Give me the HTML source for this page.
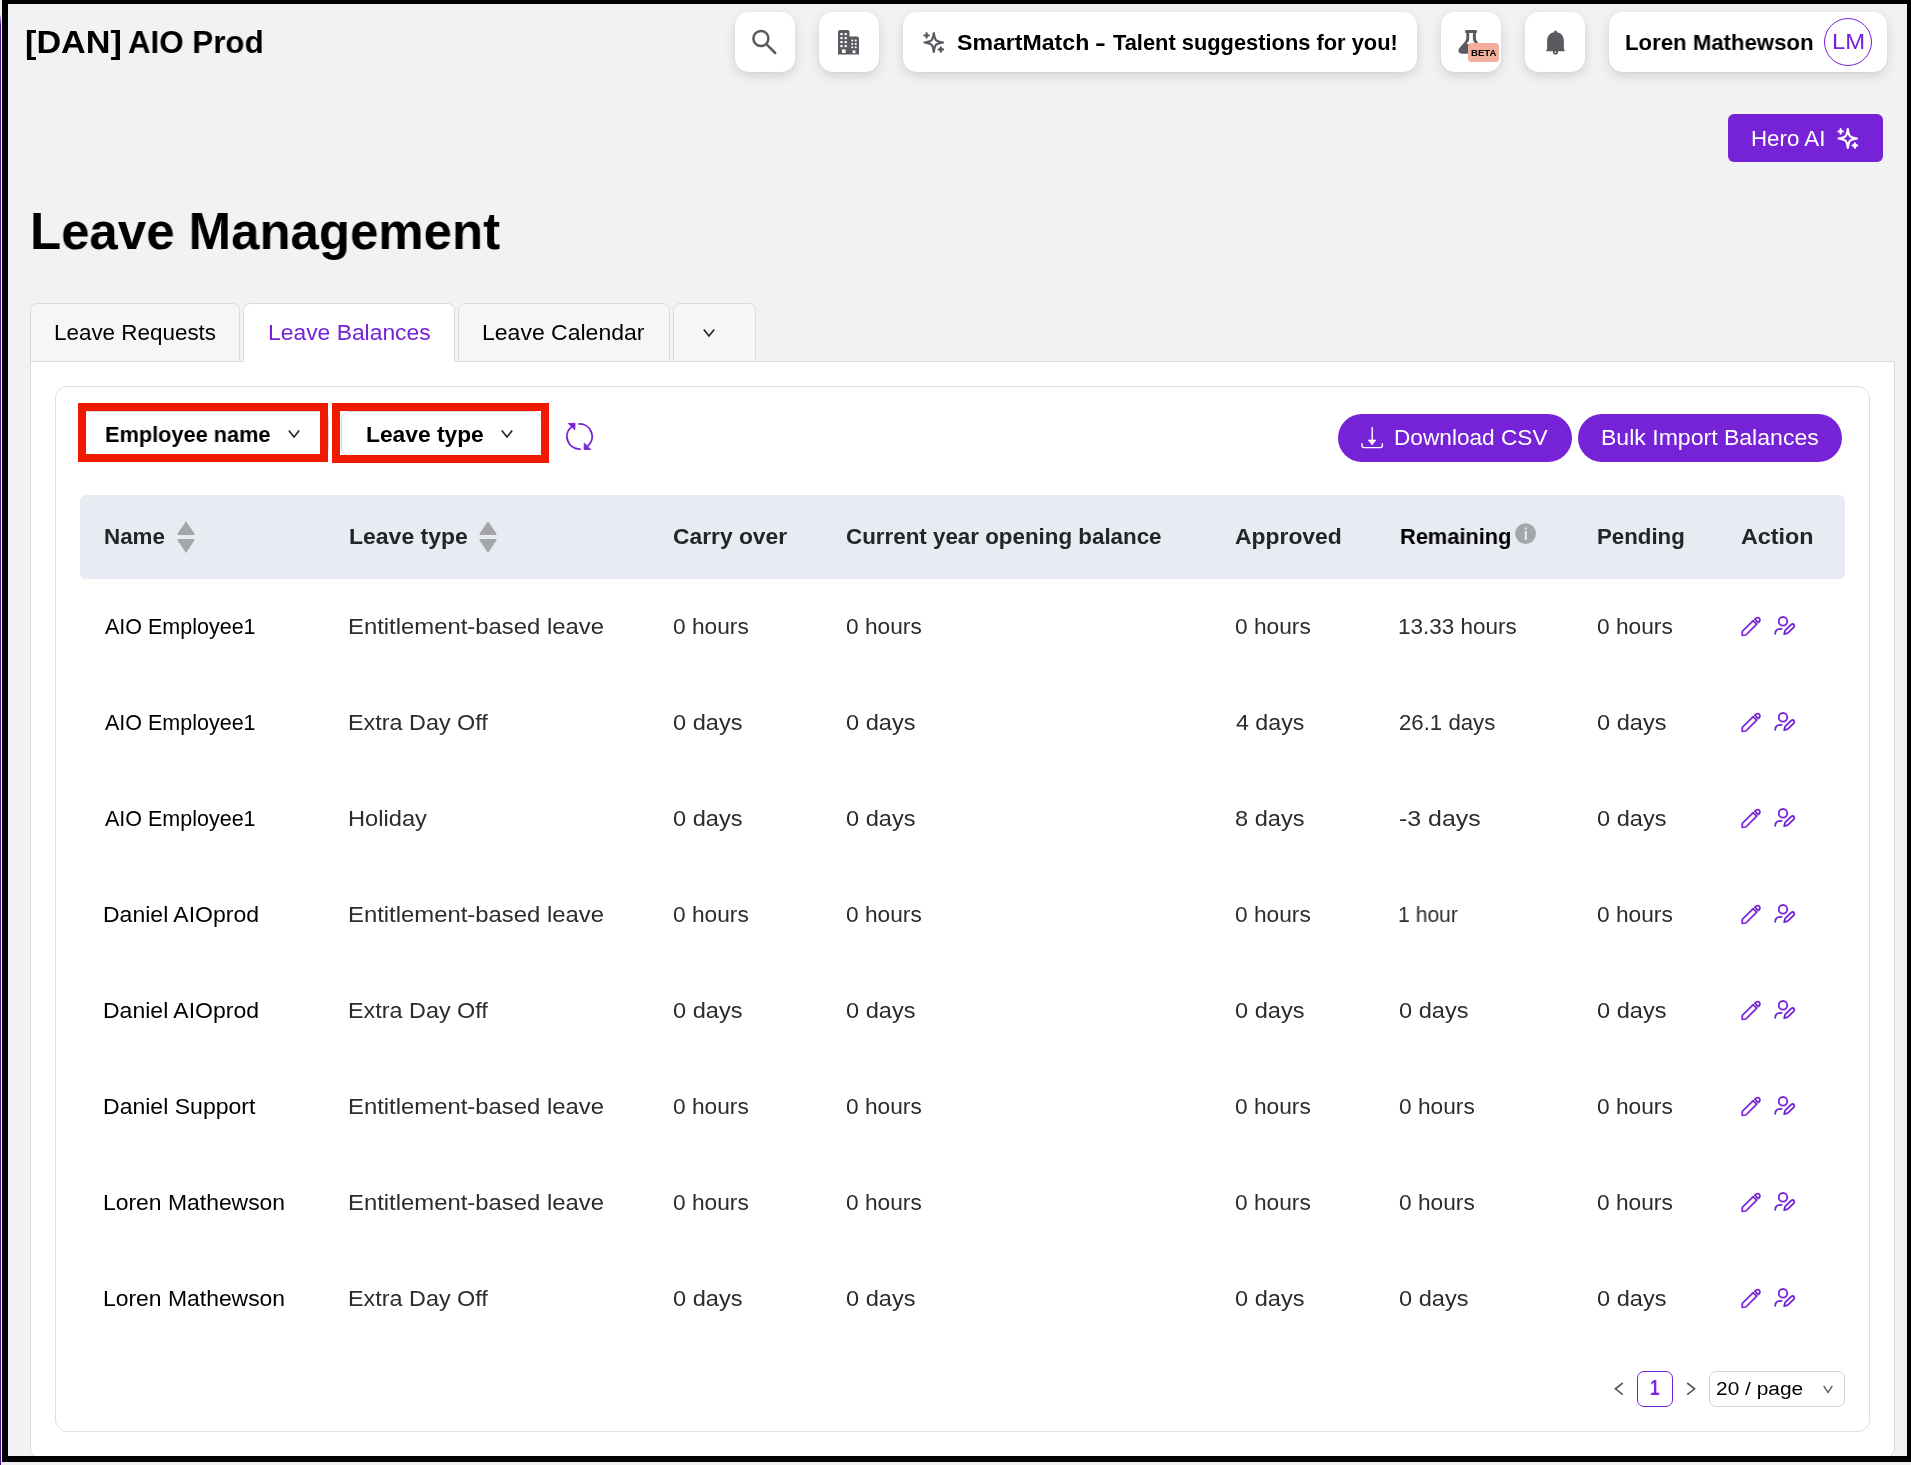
<!DOCTYPE html>
<html lang="en"><head><meta charset="utf-8"><title>Leave Management</title>
<style>
*{box-sizing:border-box}
html,body{margin:0;padding:0}
body{width:1911px;height:1465px;overflow:hidden;position:relative;background:#f1f2f4;
 font-family:"Liberation Sans",sans-serif;color:#000;-webkit-font-smoothing:antialiased}
.a,.t{position:absolute}
.t{white-space:nowrap;display:block;will-change:transform;transform-origin:0 0}
.hb{position:absolute;top:12px;height:60px;background:#fff;border-radius:14px;
 box-shadow:0 4px 12px rgba(0,0,0,.13),0 1px 3px rgba(0,0,0,.04)}
.tab{position:absolute;top:303px;height:59px;border:1px solid #d9dce1;border-radius:7px 7px 0 0;background:#f6f6f7}
.tab.on{background:#fff;border-bottom-color:#fff}
.panel{position:absolute;left:30px;top:361px;width:1865px;height:1097px;background:#fff;
 border:1px solid #d9dce1;border-radius:0 0 9px 9px}
.card{position:absolute;left:55px;top:386px;width:1815px;height:1046px;background:#fff;border:1px solid #dcdfe4;border-radius:12px}
.red{position:absolute;border:8px solid #f01a00}
.pill{position:absolute;top:414px;height:48px;border-radius:24px;background:#7622d7}
.thead{position:absolute;left:80px;top:495px;width:1765px;height:84px;background:#e8ebf2;border-radius:6px}
svg{position:absolute;overflow:visible}
</style></head>
<body>
<header>
<span class="t " style="left:25.00px;top:22.00px;line-height:40px;font-size:32px;font-weight:700;color:#000;transform:scaleX(1.0690);">[DAN] </span>
<span class="t " style="left:128.00px;top:22.00px;line-height:40px;font-size:32px;font-weight:700;color:#000;transform:scaleX(0.9779);">AIO Prod</span>
<div class="hb" style="left:735px;width:60px"></div>
<svg style="left:748px;top:26px" width="32" height="32" viewBox="0 0 32 32" fill="none" stroke="#595b60" stroke-width="2.5" stroke-linecap="round"><circle cx="12.9" cy="12.5" r="7.5"/><path d="M18.6 18.4 L27.2 27"/></svg>
<div class="hb" style="left:819px;width:60px"></div>
<svg style="left:838px;top:29.5px" width="22" height="25" viewBox="0 0 22 25"><path d="M0 2 Q0 0 2 0 L9.5 0 Q11.5 0 11.5 2 L11.5 6.6 L19 6.6 Q21 6.6 21 8.6 L21 24.6 L0 24.6 Z" fill="#595b60"/><g fill="#fff"><rect x="2.4" y="3" width="2.2" height="2.2"/><rect x="6.6" y="3" width="2.2" height="2.2"/><rect x="2.4" y="7" width="2.2" height="2.2"/><rect x="6.6" y="7" width="2.2" height="2.2"/><rect x="2.4" y="11" width="2.2" height="2.2"/><rect x="6.6" y="11" width="2.2" height="2.2"/><rect x="2.4" y="15" width="2.2" height="2.2"/><rect x="6.6" y="15" width="2.2" height="2.2"/><rect x="4" y="19.4" width="3.6" height="3.6"/><rect x="13.4" y="9.6" width="1.8" height="1.8"/><rect x="16.8" y="9.6" width="1.8" height="1.8"/><rect x="13.4" y="13" width="1.8" height="1.8"/><rect x="16.8" y="13" width="1.8" height="1.8"/><rect x="13.4" y="16.4" width="1.8" height="1.8"/><rect x="16.8" y="16.4" width="1.8" height="1.8"/><rect x="14.6" y="20.4" width="2.8" height="2.8"/></g></svg>
<div class="hb" style="left:903px;width:514px"></div>
<svg style="left:923.1px;top:32px" width="22" height="21" viewBox="0 0 22 21" fill="none" stroke="#595b60" stroke-width="2.2" stroke-linejoin="round"><path d="M10.8 1.2 C11.9 8.6 12.7 9.4 20 10.5 C12.7 11.6 11.9 12.4 10.8 19.8 C9.7 12.4 8.9 11.6 1.5 10.5 C8.9 9.4 9.7 8.6 10.8 1.2 Z"/><path d="M3.6 1.0 Q3.6 3.4 6.0 3.4 Q3.6 3.4 3.6 5.8 Q3.6 3.4 1.2 3.4 Q3.6 3.4 3.6 1.0 Z" fill="#595b60" stroke-width="1.9"/><path d="M17.9 15.1 Q17.9 17.5 20.3 17.5 Q17.9 17.5 17.9 19.9 Q17.9 17.5 15.5 17.5 Q17.9 17.5 17.9 15.1 Z" fill="#595b60" stroke-width="1.9"/></svg>
<span class="t " style="left:957.00px;top:28.00px;line-height:30px;font-size:21.7px;font-weight:700;color:#000;transform:scaleX(1.0656);">SmartMatch </span>
<span class="t " style="left:1095.00px;top:28.00px;line-height:30px;font-size:21.7px;font-weight:700;color:#000;transform:scaleX(1.4911);">- </span>
<span class="t " style="left:1113.00px;top:28.00px;line-height:30px;font-size:21.7px;font-weight:700;color:#000;transform:scaleX(1.0071);">Talent suggestions for you!</span>
<div class="hb" style="left:1441px;width:60px"></div>
<svg style="left:1458px;top:30px" width="27" height="24" viewBox="0 0 27 24"><path d="M8.4 0 L17.6 0 Q19.1 0 19.1 1.5 Q19.1 3 17.9 3 L17.9 8 Q17.9 10.5 19.5 12 L24 17 Q26.5 20 25.5 22 Q24.8 23.7 22 23.7 L4.2 23.7 Q1.4 23.7 0.7 22 Q-0.3 20 2.2 17 L6.7 12 Q8.3 10.5 8.3 8 L8.3 3 Q6.9 3 6.9 1.5 Q6.9 0 8.4 0 Z" fill="#595b60"/><path d="M11.2 3 L14.9 3 L14.9 8.5 Q14.9 11 16.5 12.6 L17.8 14 L8.4 14 L9.7 12.6 Q11.2 11 11.2 8.5 Z" fill="#fff"/></svg>
<div class="a" style="left:1468.2px;top:43.2px;width:30.6px;height:19.1px;border-radius:3.5px;background:#f3ae9d"></div>
<span class="t " style="left:1471.00px;top:46.00px;line-height:14px;font-size:9.6px;font-weight:700;color:#000;transform:scaleX(1.0000);">BETA</span>
<div class="hb" style="left:1525px;width:60px"></div>
<svg style="left:1546px;top:29.5px" width="19" height="25" viewBox="0 0 19 25"><path d="M9.5 0.5 Q10.9 0.5 11.2 2.2 C15.6 2.9 17.9 6.6 17.9 11.2 L17.9 19.2 L18.9 20.6 L18.9 21.3 L0.1 21.3 L0.1 20.6 L1.1 19.2 L1.1 11.2 C1.1 6.6 3.4 2.9 7.8 2.2 Q8.1 0.5 9.5 0.5 Z" fill="#595b60"/><circle cx="9.5" cy="22" r="2.6" fill="#595b60"/><circle cx="9.5" cy="22.3" r="0.8" fill="#fff"/></svg>
<div class="hb" style="left:1609px;width:278px"></div>
<span class="t " style="left:1625.00px;top:27.00px;line-height:31px;font-size:22.3px;font-weight:700;color:#000;transform:scaleX(0.9947);">Loren Mathewson</span>
<div class="a" style="left:1824px;top:18px;width:48px;height:48px;border-radius:50%;border:1.5px solid #7622d7"></div>
<span class="t " style="left:1832.00px;top:27.00px;line-height:30px;font-size:21.4px;font-weight:400;color:#7622d7;transform:scaleX(1.1154);">LM</span>
</header>
<div class="a" style="left:1728px;top:114px;width:155px;height:48px;border-radius:6px;background:#7622d7"></div>
<span class="t " style="left:1751.00px;top:123.00px;line-height:31px;font-size:22.3px;font-weight:400;color:#fff;transform:scaleX(1.0000);">Hero AI</span>
<svg style="left:1837px;top:128.1px" width="22" height="21" viewBox="0 0 22 21" fill="none" stroke="#fff" stroke-width="2.2" stroke-linejoin="round"><path d="M10.8 1.2 C11.9 8.6 12.7 9.4 20 10.5 C12.7 11.6 11.9 12.4 10.8 19.8 C9.7 12.4 8.9 11.6 1.5 10.5 C8.9 9.4 9.7 8.6 10.8 1.2 Z"/><path d="M3.6 1.0 Q3.6 3.4 6.0 3.4 Q3.6 3.4 3.6 5.8 Q3.6 3.4 1.2 3.4 Q3.6 3.4 3.6 1.0 Z" fill="#fff" stroke-width="1.9"/><path d="M17.9 15.1 Q17.9 17.5 20.3 17.5 Q17.9 17.5 17.9 19.9 Q17.9 17.5 15.5 17.5 Q17.9 17.5 17.9 15.1 Z" fill="#fff" stroke-width="1.9"/></svg>
<h1 style="margin:0"><span class="t " style="left:30.00px;top:201.00px;line-height:60px;font-size:51.5px;font-weight:700;color:#000;transform:scaleX(0.9894);">Leave Management</span></h1>
<nav>
<div class="panel"></div>
<div class="tab" style="left:30px;width:210px"></div>
<div class="tab on" style="left:243px;width:212px"></div>
<div class="tab" style="left:458px;width:212px"></div>
<div class="tab" style="left:673px;width:83px"></div>
<span class="t " style="left:54.00px;top:317.00px;line-height:31px;font-size:22px;font-weight:400;color:#000;transform:scaleX(1.0192);">Leave Requests</span>
<span class="t " style="left:268.00px;top:317.00px;line-height:31px;font-size:22px;font-weight:400;color:#7622d7;transform:scaleX(1.0390);">Leave Balances</span>
<span class="t " style="left:482.00px;top:317.00px;line-height:31px;font-size:22px;font-weight:400;color:#000;transform:scaleX(1.0458);">Leave Calendar</span>
<svg style="left:703px;top:327.5px" width="12" height="10" viewBox="0 0 12 10" fill="none" stroke="#222" stroke-width="1.6"><path d="M0.8 1.6 L6 8 L11.2 1.6"/></svg>
</nav>
<main>
<div class="card"></div>
<div class="a" style="left:80px;top:411px;width:249px;height:46px;border:1px solid #d5d8dd;border-radius:9px"></div>
<div class="a" style="left:341px;top:411px;width:200.5px;height:46px;border:1px solid #d5d8dd;border-radius:9px"></div>
<div class="red" style="left:78px;top:403px;width:250px;height:59px"></div>
<div class="red" style="left:332px;top:403px;width:217px;height:60px"></div>
<span class="t " style="left:105.00px;top:419.00px;line-height:31px;font-size:22px;font-weight:700;color:#000;transform:scaleX(0.9880);">Employee name</span>
<svg style="left:288px;top:429px" width="12" height="10" viewBox="0 0 12 10" fill="none" stroke="#222" stroke-width="1.6"><path d="M0.8 1.4 L6 8 L11.2 1.4"/></svg>
<span class="t " style="left:366.00px;top:419.00px;line-height:31px;font-size:22px;font-weight:700;color:#000;transform:scaleX(1.0357);">Leave type</span>
<svg style="left:500.5px;top:429px" width="12" height="10" viewBox="0 0 12 10" fill="none" stroke="#222" stroke-width="1.6"><path d="M0.8 1.4 L6 8 L11.2 1.4"/></svg>
<svg style="left:555px;top:415px" width="50" height="45" viewBox="0 0 50 45" fill="none" stroke="#7622d7" stroke-width="1.9" stroke-linecap="round"><path d="M24.13 8.91 A12.6 12.6 0 0 1 33 30.86"/><path d="M25 34.09 A12.6 12.6 0 0 1 16.14 12.14"/><path d="M29.3 28.3 L29.1 34.5 L35.3 34.4 Z" fill="#7622d7" stroke-width="0.9" stroke-linejoin="round"/><path d="M13.6 8.5 L20.05 8.35 L19.8 14.5 Z" fill="#7622d7" stroke-width="0.9" stroke-linejoin="round"/></svg>
<div class="pill" style="left:1338px;width:234px"></div>
<svg style="left:1361px;top:427px" width="23" height="22" viewBox="0 0 23 22" fill="none" stroke="#fff" stroke-width="1.4" stroke-linecap="round" stroke-linejoin="round"><path d="M11.2 0.5 L11.2 16"/><path d="M7.6 13.1 L14.8 13.1 L11.2 17.6 Z" fill="#fff" stroke-width="0.8"/><path d="M1 16.8 L1 18.6 Q1 20.6 3 20.6 L19.4 20.6 Q21.4 20.6 21.4 18.6 L21.4 16.8"/></svg>
<span class="t " style="left:1394.00px;top:422.00px;line-height:31px;font-size:22.2px;font-weight:400;color:#fff;transform:scaleX(1.0203);">Download CSV</span>
<div class="pill" style="left:1578px;width:264px"></div>
<span class="t " style="left:1601.00px;top:422.00px;line-height:31px;font-size:22.2px;font-weight:400;color:#fff;transform:scaleX(1.0386);">Bulk Import Balances</span>
<div class="thead"></div>
<span class="t " style="left:104.00px;top:521.00px;line-height:31px;font-size:22px;font-weight:700;color:#22252a;transform:scaleX(1.0172);">Name</span>
<svg style="left:176px;top:520px" width="20" height="34" viewBox="0 0 20 34"><path d="M10 1.2 L18.4 13.6 Q19 15.1 17.4 15.1 L2.6 15.1 Q1 15.1 1.6 13.6 Z" fill="#a4a6aa"/><path d="M10 32.9 L18.4 20.6 Q19 19.1 17.4 19.1 L2.6 19.1 Q1 19.1 1.6 20.6 Z" fill="#a4a6aa"/></svg>
<span class="t " style="left:349.00px;top:521.00px;line-height:31px;font-size:22px;font-weight:700;color:#22252a;transform:scaleX(1.0446);">Leave type</span>
<svg style="left:478.2px;top:520px" width="20" height="34" viewBox="0 0 20 34"><path d="M10 1.2 L18.4 13.6 Q19 15.1 17.4 15.1 L2.6 15.1 Q1 15.1 1.6 13.6 Z" fill="#a4a6aa"/><path d="M10 32.9 L18.4 20.6 Q19 19.1 17.4 19.1 L2.6 19.1 Q1 19.1 1.6 20.6 Z" fill="#a4a6aa"/></svg>
<span class="t " style="left:673.00px;top:521.00px;line-height:31px;font-size:22px;font-weight:700;color:#22252a;transform:scaleX(1.0367);">Carry over</span>
<span class="t " style="left:846.00px;top:521.00px;line-height:31px;font-size:22px;font-weight:700;color:#22252a;transform:scaleX(1.0162);">Current year opening balance</span>
<span class="t " style="left:1235.00px;top:521.00px;line-height:31px;font-size:22px;font-weight:700;color:#22252a;transform:scaleX(1.0400);">Approved</span>
<span class="t " style="left:1400.00px;top:521.00px;line-height:31px;font-size:22px;font-weight:700;color:#000;transform:scaleX(0.9909);">Remaining</span>
<svg style="left:1515px;top:522.7px" width="21.2" height="21.2" viewBox="0 0 21.2 21.2"><circle cx="10.6" cy="10.6" r="10.4" fill="#a3a6ab"/><rect x="9.85" y="7.9" width="1.9" height="9" rx=".5" fill="#eceef3"/><rect x="9.75" y="4.5" width="2.1" height="1.9" rx=".6" fill="#eceef3"/></svg>
<span class="t " style="left:1597.00px;top:521.00px;line-height:31px;font-size:22px;font-weight:700;color:#22252a;transform:scaleX(1.0119);">Pending</span>
<span class="t " style="left:1741.00px;top:521.00px;line-height:31px;font-size:22px;font-weight:700;color:#22252a;transform:scaleX(1.0606);">Action</span>
<div>
<span class="t " style="left:105.00px;top:612.00px;line-height:30px;font-size:21.5px;font-weight:400;color:#000;transform:scaleX(1.0000);">AIO Employee1</span>
<span class="t " style="left:348.00px;top:612.00px;line-height:30px;font-size:21.5px;font-weight:400;color:#2a2c30;transform:scaleX(1.1096);">Entitlement-based leave</span>
<span class="t " style="left:673.00px;top:612.00px;line-height:30px;font-size:21.5px;font-weight:400;color:#2a2c30;transform:scaleX(1.0571);">0 hours</span>
<span class="t " style="left:846.00px;top:612.00px;line-height:30px;font-size:21.5px;font-weight:400;color:#2a2c30;transform:scaleX(1.0571);">0 hours</span>
<span class="t " style="left:1235.00px;top:612.00px;line-height:30px;font-size:21.5px;font-weight:400;color:#2a2c30;transform:scaleX(1.0571);">0 hours</span>
<span class="t " style="left:1398.00px;top:612.00px;line-height:30px;font-size:21.5px;font-weight:400;color:#2a2c30;transform:scaleX(1.0450);">13.33 hours</span>
<span class="t " style="left:1597.00px;top:612.00px;line-height:30px;font-size:21.5px;font-weight:400;color:#2a2c30;transform:scaleX(1.0571);">0 hours</span>
<svg style="left:1740.6px;top:616.0px" width="21" height="21" viewBox="0 0 21 21" fill="none" stroke="#7622d7" stroke-width="1.7" stroke-linejoin="round" stroke-linecap="round"><path d="M1.2 19.5 L1.3 15.4 L12.2 4.6 L15.7 8.1 L4.9 19.0 Z"/><path d="M13.9 3.1 Q16.4 .5 18.5 2.4 Q19.8 4.5 17.3 6.7 Z"/></svg>
<svg style="left:1773.6px;top:616.0px" width="22" height="20" viewBox="0 0 22 20" fill="none" stroke="#7622d7" stroke-width="1.8" stroke-linejoin="round" stroke-linecap="round"><circle cx="9" cy="5.3" r="4.3"/><path d="M1.2 17.8 Q1 12.6 7.6 12.8"/><path d="M10.2 18.2 L11 14.6 L17.2 8.6 Q18.8 7.4 20 8.7 Q20.9 10 19.6 11.4 L13.6 17.2 Z"/></svg>
</div>
<div>
<span class="t " style="left:105.00px;top:708.00px;line-height:30px;font-size:21.5px;font-weight:400;color:#000;transform:scaleX(1.0000);">AIO Employee1</span>
<span class="t " style="left:348.00px;top:708.00px;line-height:30px;font-size:21.5px;font-weight:400;color:#2a2c30;transform:scaleX(1.0866);">Extra Day Off</span>
<span class="t " style="left:673.00px;top:708.00px;line-height:30px;font-size:21.5px;font-weight:400;color:#2a2c30;transform:scaleX(1.0968);">0 days</span>
<span class="t " style="left:846.00px;top:708.00px;line-height:30px;font-size:21.5px;font-weight:400;color:#2a2c30;transform:scaleX(1.0968);">0 days</span>
<span class="t " style="left:1236.00px;top:708.00px;line-height:30px;font-size:21.5px;font-weight:400;color:#2a2c30;transform:scaleX(1.0794);">4 days</span>
<span class="t " style="left:1399.00px;top:708.00px;line-height:30px;font-size:21.5px;font-weight:400;color:#2a2c30;transform:scaleX(1.0326);">26.1 days</span>
<span class="t " style="left:1597.00px;top:708.00px;line-height:30px;font-size:21.5px;font-weight:400;color:#2a2c30;transform:scaleX(1.0968);">0 days</span>
<svg style="left:1740.6px;top:712.0px" width="21" height="21" viewBox="0 0 21 21" fill="none" stroke="#7622d7" stroke-width="1.7" stroke-linejoin="round" stroke-linecap="round"><path d="M1.2 19.5 L1.3 15.4 L12.2 4.6 L15.7 8.1 L4.9 19.0 Z"/><path d="M13.9 3.1 Q16.4 .5 18.5 2.4 Q19.8 4.5 17.3 6.7 Z"/></svg>
<svg style="left:1773.6px;top:712.0px" width="22" height="20" viewBox="0 0 22 20" fill="none" stroke="#7622d7" stroke-width="1.8" stroke-linejoin="round" stroke-linecap="round"><circle cx="9" cy="5.3" r="4.3"/><path d="M1.2 17.8 Q1 12.6 7.6 12.8"/><path d="M10.2 18.2 L11 14.6 L17.2 8.6 Q18.8 7.4 20 8.7 Q20.9 10 19.6 11.4 L13.6 17.2 Z"/></svg>
</div>
<div>
<span class="t " style="left:105.00px;top:804.00px;line-height:30px;font-size:21.5px;font-weight:400;color:#000;transform:scaleX(1.0000);">AIO Employee1</span>
<span class="t " style="left:348.00px;top:804.00px;line-height:30px;font-size:21.5px;font-weight:400;color:#2a2c30;transform:scaleX(1.1000);">Holiday</span>
<span class="t " style="left:673.00px;top:804.00px;line-height:30px;font-size:21.5px;font-weight:400;color:#2a2c30;transform:scaleX(1.0968);">0 days</span>
<span class="t " style="left:846.00px;top:804.00px;line-height:30px;font-size:21.5px;font-weight:400;color:#2a2c30;transform:scaleX(1.0968);">0 days</span>
<span class="t " style="left:1235.00px;top:804.00px;line-height:30px;font-size:21.5px;font-weight:400;color:#2a2c30;transform:scaleX(1.0968);">8 days</span>
<span class="t " style="left:1399.00px;top:804.00px;line-height:30px;font-size:21.5px;font-weight:400;color:#2a2c30;transform:scaleX(1.1594);">-3 days</span>
<span class="t " style="left:1597.00px;top:804.00px;line-height:30px;font-size:21.5px;font-weight:400;color:#2a2c30;transform:scaleX(1.0968);">0 days</span>
<svg style="left:1740.6px;top:808.0px" width="21" height="21" viewBox="0 0 21 21" fill="none" stroke="#7622d7" stroke-width="1.7" stroke-linejoin="round" stroke-linecap="round"><path d="M1.2 19.5 L1.3 15.4 L12.2 4.6 L15.7 8.1 L4.9 19.0 Z"/><path d="M13.9 3.1 Q16.4 .5 18.5 2.4 Q19.8 4.5 17.3 6.7 Z"/></svg>
<svg style="left:1773.6px;top:808.0px" width="22" height="20" viewBox="0 0 22 20" fill="none" stroke="#7622d7" stroke-width="1.8" stroke-linejoin="round" stroke-linecap="round"><circle cx="9" cy="5.3" r="4.3"/><path d="M1.2 17.8 Q1 12.6 7.6 12.8"/><path d="M10.2 18.2 L11 14.6 L17.2 8.6 Q18.8 7.4 20 8.7 Q20.9 10 19.6 11.4 L13.6 17.2 Z"/></svg>
</div>
<div>
<span class="t " style="left:103.00px;top:900.00px;line-height:30px;font-size:21.5px;font-weight:400;color:#000;transform:scaleX(1.0705);">Daniel AIOprod</span>
<span class="t " style="left:348.00px;top:900.00px;line-height:30px;font-size:21.5px;font-weight:400;color:#2a2c30;transform:scaleX(1.1096);">Entitlement-based leave</span>
<span class="t " style="left:673.00px;top:900.00px;line-height:30px;font-size:21.5px;font-weight:400;color:#2a2c30;transform:scaleX(1.0571);">0 hours</span>
<span class="t " style="left:846.00px;top:900.00px;line-height:30px;font-size:21.5px;font-weight:400;color:#2a2c30;transform:scaleX(1.0571);">0 hours</span>
<span class="t " style="left:1235.00px;top:900.00px;line-height:30px;font-size:21.5px;font-weight:400;color:#2a2c30;transform:scaleX(1.0571);">0 hours</span>
<span class="t " style="left:1398.00px;top:900.00px;line-height:30px;font-size:21.5px;font-weight:400;color:#2a2c30;transform:scaleX(0.9831);">1 hour</span>
<span class="t " style="left:1597.00px;top:900.00px;line-height:30px;font-size:21.5px;font-weight:400;color:#2a2c30;transform:scaleX(1.0571);">0 hours</span>
<svg style="left:1740.6px;top:904.0px" width="21" height="21" viewBox="0 0 21 21" fill="none" stroke="#7622d7" stroke-width="1.7" stroke-linejoin="round" stroke-linecap="round"><path d="M1.2 19.5 L1.3 15.4 L12.2 4.6 L15.7 8.1 L4.9 19.0 Z"/><path d="M13.9 3.1 Q16.4 .5 18.5 2.4 Q19.8 4.5 17.3 6.7 Z"/></svg>
<svg style="left:1773.6px;top:904.0px" width="22" height="20" viewBox="0 0 22 20" fill="none" stroke="#7622d7" stroke-width="1.8" stroke-linejoin="round" stroke-linecap="round"><circle cx="9" cy="5.3" r="4.3"/><path d="M1.2 17.8 Q1 12.6 7.6 12.8"/><path d="M10.2 18.2 L11 14.6 L17.2 8.6 Q18.8 7.4 20 8.7 Q20.9 10 19.6 11.4 L13.6 17.2 Z"/></svg>
</div>
<div>
<span class="t " style="left:103.00px;top:996.00px;line-height:30px;font-size:21.5px;font-weight:400;color:#000;transform:scaleX(1.0705);">Daniel AIOprod</span>
<span class="t " style="left:348.00px;top:996.00px;line-height:30px;font-size:21.5px;font-weight:400;color:#2a2c30;transform:scaleX(1.0866);">Extra Day Off</span>
<span class="t " style="left:673.00px;top:996.00px;line-height:30px;font-size:21.5px;font-weight:400;color:#2a2c30;transform:scaleX(1.0968);">0 days</span>
<span class="t " style="left:846.00px;top:996.00px;line-height:30px;font-size:21.5px;font-weight:400;color:#2a2c30;transform:scaleX(1.0968);">0 days</span>
<span class="t " style="left:1235.00px;top:996.00px;line-height:30px;font-size:21.5px;font-weight:400;color:#2a2c30;transform:scaleX(1.0968);">0 days</span>
<span class="t " style="left:1399.00px;top:996.00px;line-height:30px;font-size:21.5px;font-weight:400;color:#2a2c30;transform:scaleX(1.0968);">0 days</span>
<span class="t " style="left:1597.00px;top:996.00px;line-height:30px;font-size:21.5px;font-weight:400;color:#2a2c30;transform:scaleX(1.0968);">0 days</span>
<svg style="left:1740.6px;top:1000.0px" width="21" height="21" viewBox="0 0 21 21" fill="none" stroke="#7622d7" stroke-width="1.7" stroke-linejoin="round" stroke-linecap="round"><path d="M1.2 19.5 L1.3 15.4 L12.2 4.6 L15.7 8.1 L4.9 19.0 Z"/><path d="M13.9 3.1 Q16.4 .5 18.5 2.4 Q19.8 4.5 17.3 6.7 Z"/></svg>
<svg style="left:1773.6px;top:1000.0px" width="22" height="20" viewBox="0 0 22 20" fill="none" stroke="#7622d7" stroke-width="1.8" stroke-linejoin="round" stroke-linecap="round"><circle cx="9" cy="5.3" r="4.3"/><path d="M1.2 17.8 Q1 12.6 7.6 12.8"/><path d="M10.2 18.2 L11 14.6 L17.2 8.6 Q18.8 7.4 20 8.7 Q20.9 10 19.6 11.4 L13.6 17.2 Z"/></svg>
</div>
<div>
<span class="t " style="left:103.00px;top:1092.00px;line-height:30px;font-size:21.5px;font-weight:400;color:#000;transform:scaleX(1.0714);">Daniel Support</span>
<span class="t " style="left:348.00px;top:1092.00px;line-height:30px;font-size:21.5px;font-weight:400;color:#2a2c30;transform:scaleX(1.1096);">Entitlement-based leave</span>
<span class="t " style="left:673.00px;top:1092.00px;line-height:30px;font-size:21.5px;font-weight:400;color:#2a2c30;transform:scaleX(1.0571);">0 hours</span>
<span class="t " style="left:846.00px;top:1092.00px;line-height:30px;font-size:21.5px;font-weight:400;color:#2a2c30;transform:scaleX(1.0571);">0 hours</span>
<span class="t " style="left:1235.00px;top:1092.00px;line-height:30px;font-size:21.5px;font-weight:400;color:#2a2c30;transform:scaleX(1.0571);">0 hours</span>
<span class="t " style="left:1399.00px;top:1092.00px;line-height:30px;font-size:21.5px;font-weight:400;color:#2a2c30;transform:scaleX(1.0571);">0 hours</span>
<span class="t " style="left:1597.00px;top:1092.00px;line-height:30px;font-size:21.5px;font-weight:400;color:#2a2c30;transform:scaleX(1.0571);">0 hours</span>
<svg style="left:1740.6px;top:1096.0px" width="21" height="21" viewBox="0 0 21 21" fill="none" stroke="#7622d7" stroke-width="1.7" stroke-linejoin="round" stroke-linecap="round"><path d="M1.2 19.5 L1.3 15.4 L12.2 4.6 L15.7 8.1 L4.9 19.0 Z"/><path d="M13.9 3.1 Q16.4 .5 18.5 2.4 Q19.8 4.5 17.3 6.7 Z"/></svg>
<svg style="left:1773.6px;top:1096.0px" width="22" height="20" viewBox="0 0 22 20" fill="none" stroke="#7622d7" stroke-width="1.8" stroke-linejoin="round" stroke-linecap="round"><circle cx="9" cy="5.3" r="4.3"/><path d="M1.2 17.8 Q1 12.6 7.6 12.8"/><path d="M10.2 18.2 L11 14.6 L17.2 8.6 Q18.8 7.4 20 8.7 Q20.9 10 19.6 11.4 L13.6 17.2 Z"/></svg>
</div>
<div>
<span class="t " style="left:103.00px;top:1188.00px;line-height:30px;font-size:21.5px;font-weight:400;color:#000;transform:scaleX(1.0655);">Loren Mathewson</span>
<span class="t " style="left:348.00px;top:1188.00px;line-height:30px;font-size:21.5px;font-weight:400;color:#2a2c30;transform:scaleX(1.1096);">Entitlement-based leave</span>
<span class="t " style="left:673.00px;top:1188.00px;line-height:30px;font-size:21.5px;font-weight:400;color:#2a2c30;transform:scaleX(1.0571);">0 hours</span>
<span class="t " style="left:846.00px;top:1188.00px;line-height:30px;font-size:21.5px;font-weight:400;color:#2a2c30;transform:scaleX(1.0571);">0 hours</span>
<span class="t " style="left:1235.00px;top:1188.00px;line-height:30px;font-size:21.5px;font-weight:400;color:#2a2c30;transform:scaleX(1.0571);">0 hours</span>
<span class="t " style="left:1399.00px;top:1188.00px;line-height:30px;font-size:21.5px;font-weight:400;color:#2a2c30;transform:scaleX(1.0571);">0 hours</span>
<span class="t " style="left:1597.00px;top:1188.00px;line-height:30px;font-size:21.5px;font-weight:400;color:#2a2c30;transform:scaleX(1.0571);">0 hours</span>
<svg style="left:1740.6px;top:1192.0px" width="21" height="21" viewBox="0 0 21 21" fill="none" stroke="#7622d7" stroke-width="1.7" stroke-linejoin="round" stroke-linecap="round"><path d="M1.2 19.5 L1.3 15.4 L12.2 4.6 L15.7 8.1 L4.9 19.0 Z"/><path d="M13.9 3.1 Q16.4 .5 18.5 2.4 Q19.8 4.5 17.3 6.7 Z"/></svg>
<svg style="left:1773.6px;top:1192.0px" width="22" height="20" viewBox="0 0 22 20" fill="none" stroke="#7622d7" stroke-width="1.8" stroke-linejoin="round" stroke-linecap="round"><circle cx="9" cy="5.3" r="4.3"/><path d="M1.2 17.8 Q1 12.6 7.6 12.8"/><path d="M10.2 18.2 L11 14.6 L17.2 8.6 Q18.8 7.4 20 8.7 Q20.9 10 19.6 11.4 L13.6 17.2 Z"/></svg>
</div>
<div>
<span class="t " style="left:103.00px;top:1284.00px;line-height:30px;font-size:21.5px;font-weight:400;color:#000;transform:scaleX(1.0655);">Loren Mathewson</span>
<span class="t " style="left:348.00px;top:1284.00px;line-height:30px;font-size:21.5px;font-weight:400;color:#2a2c30;transform:scaleX(1.0866);">Extra Day Off</span>
<span class="t " style="left:673.00px;top:1284.00px;line-height:30px;font-size:21.5px;font-weight:400;color:#2a2c30;transform:scaleX(1.0968);">0 days</span>
<span class="t " style="left:846.00px;top:1284.00px;line-height:30px;font-size:21.5px;font-weight:400;color:#2a2c30;transform:scaleX(1.0968);">0 days</span>
<span class="t " style="left:1235.00px;top:1284.00px;line-height:30px;font-size:21.5px;font-weight:400;color:#2a2c30;transform:scaleX(1.0968);">0 days</span>
<span class="t " style="left:1399.00px;top:1284.00px;line-height:30px;font-size:21.5px;font-weight:400;color:#2a2c30;transform:scaleX(1.0968);">0 days</span>
<span class="t " style="left:1597.00px;top:1284.00px;line-height:30px;font-size:21.5px;font-weight:400;color:#2a2c30;transform:scaleX(1.0968);">0 days</span>
<svg style="left:1740.6px;top:1288.0px" width="21" height="21" viewBox="0 0 21 21" fill="none" stroke="#7622d7" stroke-width="1.7" stroke-linejoin="round" stroke-linecap="round"><path d="M1.2 19.5 L1.3 15.4 L12.2 4.6 L15.7 8.1 L4.9 19.0 Z"/><path d="M13.9 3.1 Q16.4 .5 18.5 2.4 Q19.8 4.5 17.3 6.7 Z"/></svg>
<svg style="left:1773.6px;top:1288.0px" width="22" height="20" viewBox="0 0 22 20" fill="none" stroke="#7622d7" stroke-width="1.8" stroke-linejoin="round" stroke-linecap="round"><circle cx="9" cy="5.3" r="4.3"/><path d="M1.2 17.8 Q1 12.6 7.6 12.8"/><path d="M10.2 18.2 L11 14.6 L17.2 8.6 Q18.8 7.4 20 8.7 Q20.9 10 19.6 11.4 L13.6 17.2 Z"/></svg>
</div>
<svg style="left:1614px;top:1382px" width="10" height="14" viewBox="0 0 10 14" fill="none" stroke="#55585e" stroke-width="1.6"><path d="M8.8 1 L1.4 6.8 L8.8 12.6"/></svg>
<div class="a" style="left:1637px;top:1371px;width:36px;height:36px;border:1.5px solid #7622d7;border-radius:7px;background:#fff"></div>
<span class="t " style="left:1650.00px;top:1373.00px;line-height:30px;font-size:21.2px;font-weight:700;color:#7622d7;transform:scaleX(0.8000);">1</span>
<svg style="left:1686px;top:1382px" width="10" height="14" viewBox="0 0 10 14" fill="none" stroke="#55585e" stroke-width="1.6"><path d="M1.2 1 L8.6 6.8 L1.2 12.6"/></svg>
<div class="a" style="left:1709px;top:1371px;width:136px;height:36px;border:1px solid #d0d3d9;border-radius:7px;background:#fff"></div>
<span class="t " style="left:1716.00px;top:1375.00px;line-height:27px;font-size:19.2px;font-weight:400;color:#000;transform:scaleX(1.0897);">20 / page</span>
<svg style="left:1823.2px;top:1384.8px" width="10" height="9" viewBox="0 0 10 9" fill="none" stroke="#5a5d63" stroke-width="1.4"><path d="M0.7 0.9 L5 7.4 L9.3 0.9"/></svg>
</main>
<div class="a" style="left:0;top:0;width:2px;height:1465px;background:#efeff1"></div>
<div class="a" style="left:0;top:1462px;width:1911px;height:3px;background:#efeff1"></div>
<div class="a" style="left:0;top:15px;width:1.25px;height:1450px;background:linear-gradient(#d9c9ea,#4c1190 10px,#4c1190)"></div>
<div class="a" style="left:2px;top:0;width:1909px;height:4.1px;background:#000"></div>
<div class="a" style="left:2px;top:0;width:5.8px;height:1462px;background:#000"></div>
<div class="a" style="left:1906.6px;top:0;width:4.4px;height:1462px;background:#000"></div>
<div class="a" style="left:2px;top:1456px;width:1909px;height:6.4px;background:#000"></div>
</body></html>
